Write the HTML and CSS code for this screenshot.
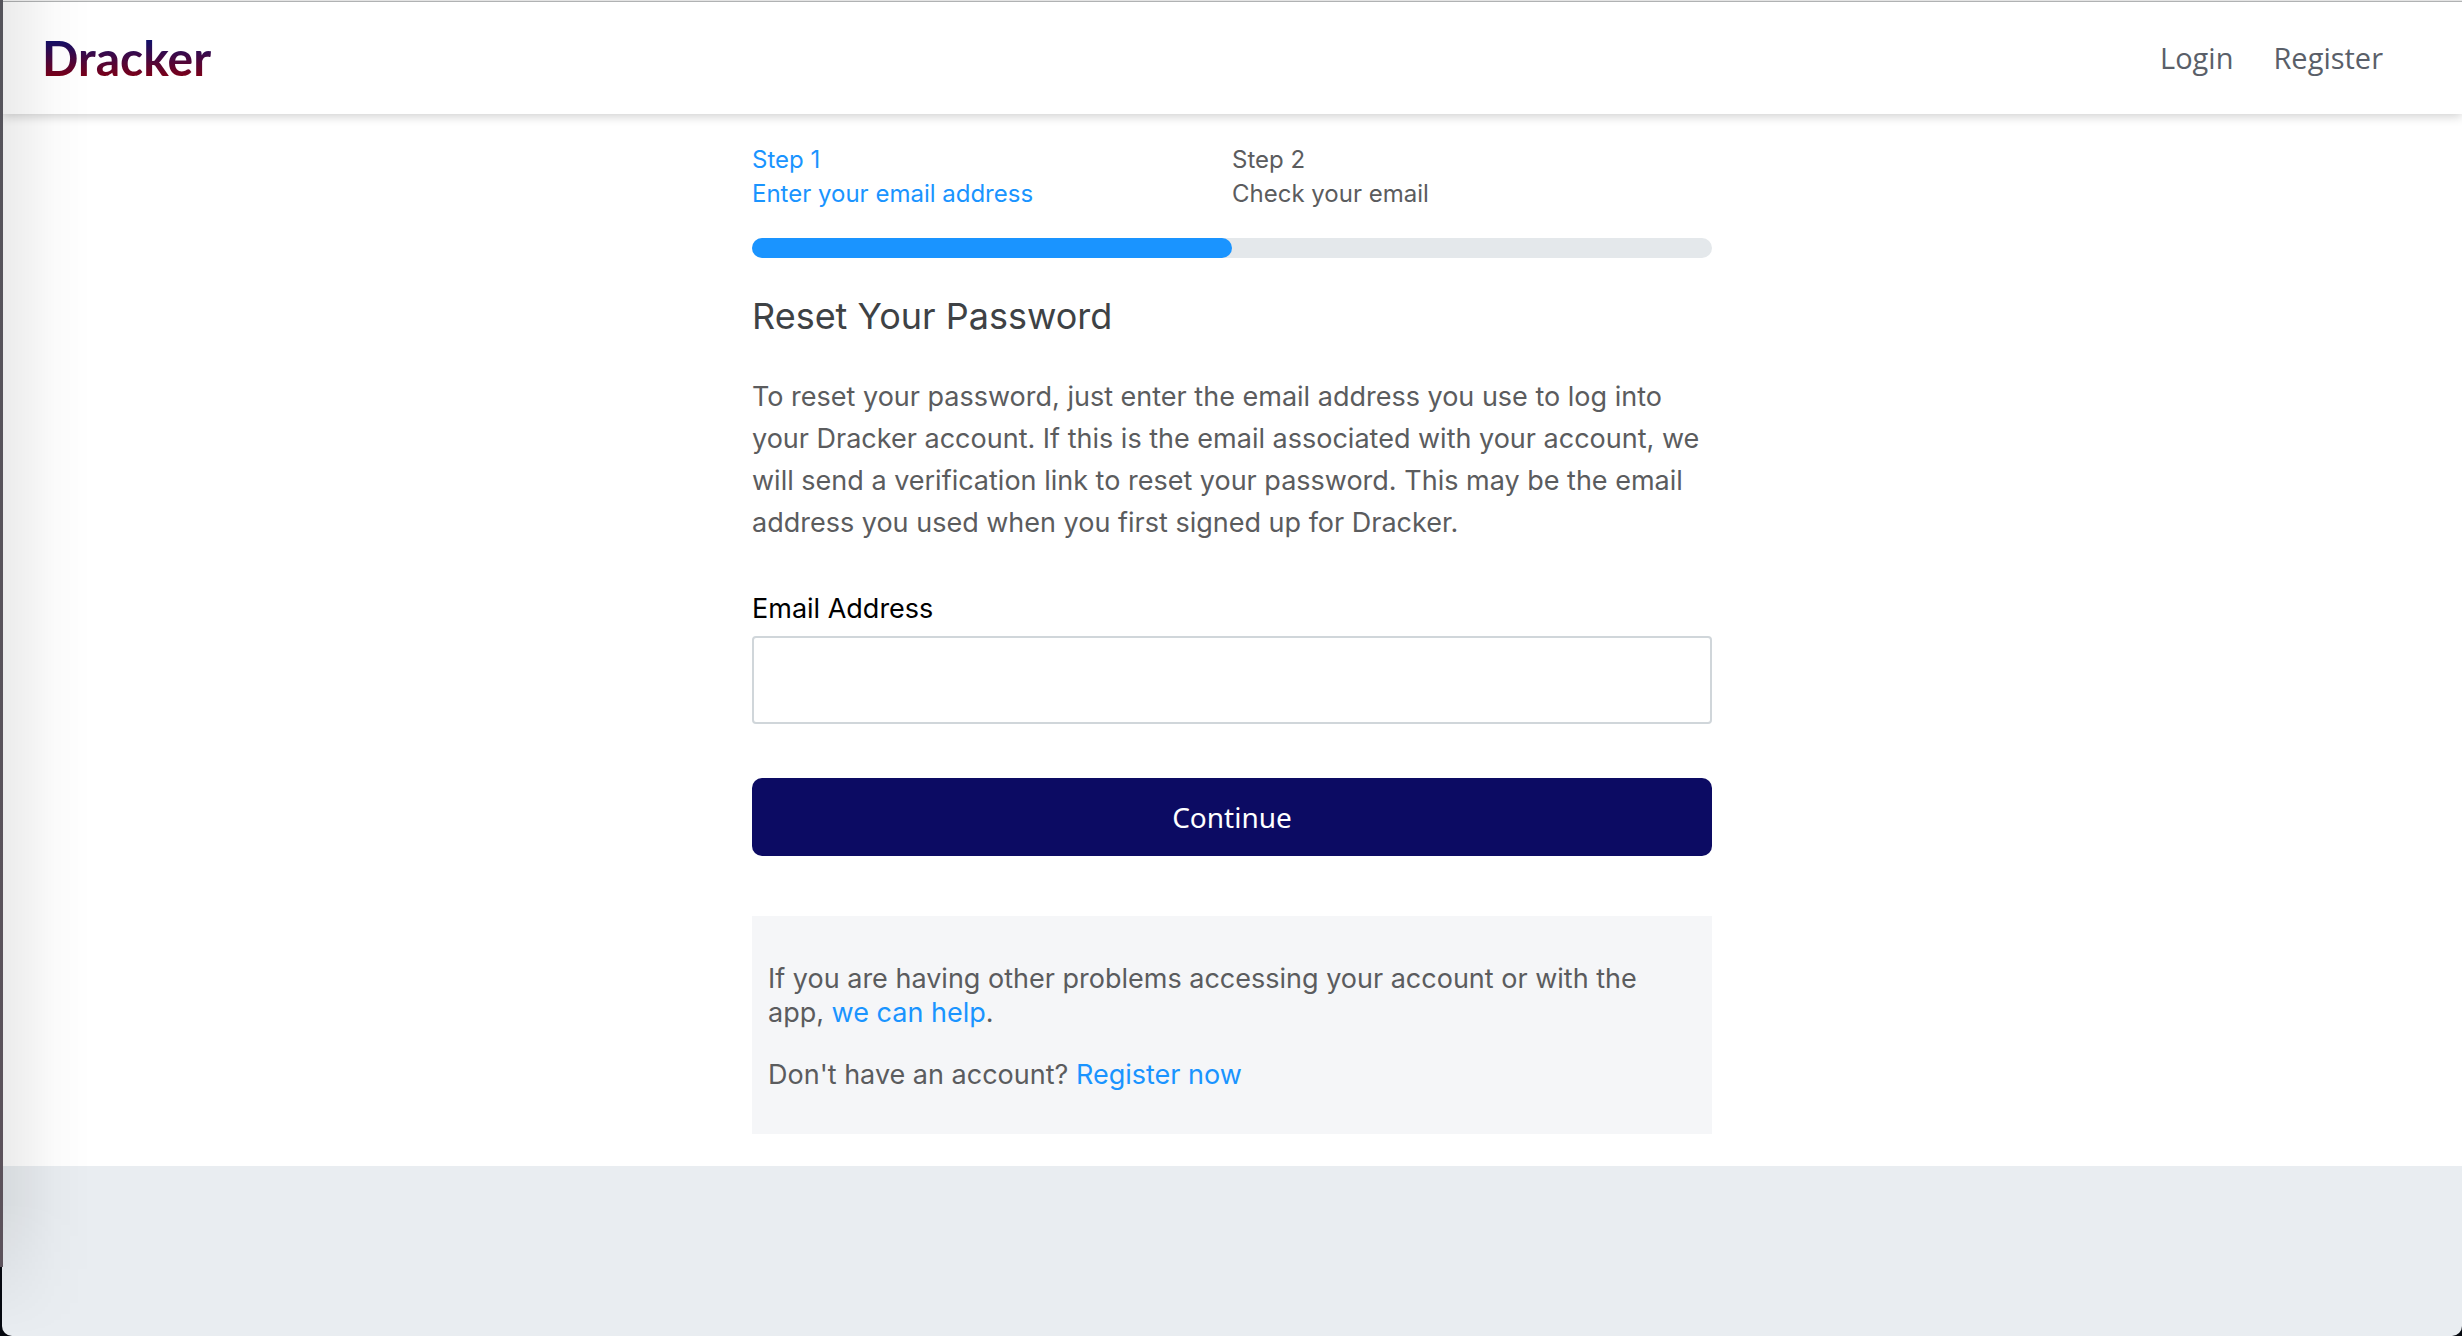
FILE: index.html
```html
<!DOCTYPE html>
<html lang="en">
<head>
  <meta charset="utf-8">
  <meta name="viewport" content="width=device-width, initial-scale=1">
  <title>Dracker - Reset Your Password</title>
  <link rel="stylesheet" href="styles.css">
</head>
<body>
  <div class="window">
    <header class="header">
      <a class="logo" href="#">Dracker</a>
      <nav class="nav">
        <a href="#">Login</a>
        <a href="#">Register</a>
      </nav>
    </header>

    <main class="main">
      <div class="column">
        <ol class="steps">
          <li class="step step-active"><span>Step 1</span><span>Enter your email address</span></li>
          <li class="step"><span>Step 2</span><span>Check your email</span></li>
        </ol>
        <div class="progress"><div class="progress-fill" style="width: 50%"></div></div>

        <h1 class="title">Reset Your Password</h1>
        <p class="intro">To reset your password, just enter the email address you use to log into your Dracker account. If this is the email associated with your account, we will send a verification link to reset your password. This may be the email address you used when you first signed up for Dracker.</p>

        <form class="form">
          <label class="label" for="email">Email Address</label>
          <input class="input" type="email" id="email" name="email">
          <button class="button" type="submit">Continue</button>
        </form>

        <aside class="help">
          <p>If you are having other problems accessing your account or with the app, <a href="#">we can help</a>.</p>
          <p>Don't have an account? <a href="#">Register now</a></p>
        </aside>
      </div>
    </main>
  </div>
</body>
</html>
```
FILE: styles.css
```css
* {
  box-sizing: border-box;
}

html {
  background: #05080f;
}

body {
  margin: 0;
  font-family: Inter, "Liberation Sans", sans-serif;
  font-size: 27px;
  line-height: 34px;
  color: #5b5c5e;
}

a {
  color: #1a94ff;
  text-decoration: none;
}

p,
h1,
ol {
  margin: 0;
  padding: 0;
}

.window {
  position: relative;
  min-height: 100vh;
  margin-left: 2px;
  border-top: 1px solid #e4e4e4;
  border-radius: 0 0 10px 10px;
  background: #e9edf1;
  overflow: hidden;
}

/* soft shade along the left edge of the window */
.window::after {
  content: "";
  position: absolute;
  inset: 0 auto 0 0;
  width: 90px;
  background: linear-gradient(to right, rgba(0, 0, 0, 0.08), rgba(0, 0, 0, 0.05) 28%, rgba(0, 0, 0, 0.015) 60%, transparent);
  -webkit-mask-image: linear-gradient(to bottom, #000 90%, transparent);
  mask-image: linear-gradient(to bottom, #000 90%, transparent);
  pointer-events: none;
}

body::before {
  content: "";
  position: absolute;
  z-index: 1;
  inset: 0 auto 69px 0;
  width: 3px;
  background: linear-gradient(#55545b, #5c525b);
}

.header {
  position: relative;
  display: flex;
  align-items: center;
  justify-content: space-between;
  height: 113px;
  padding: 0 79px 0 40px;
  border-top: 1px solid #b0b2b3;
  background: #fff;
  box-shadow: 0 2px 10px rgba(0, 0, 0, 0.2);
}

.logo {
  font-family: Lato, sans-serif;
  font-size: 48px;
  font-weight: 700;
  line-height: 60px;
  color: transparent;
  background: linear-gradient(#10106a 20%, #7a0019 80%);
  -webkit-background-clip: text;
  background-clip: text;
}

.nav {
  display: flex;
  gap: 40px;
  font-family: "Open Sans", sans-serif;
  font-size: 29px;
}

.nav a {
  color: #5a5f69;
}

.main {
  padding: 29px 24px 32px;
  background: #fff;
}

.column {
  max-width: 960px;
  margin: 0 auto;
}

.steps {
  display: grid;
  grid-template-columns: 1fr 1fr;
  list-style: none;
  font-size: 24px;
}

.step {
  display: flex;
  flex-direction: column;
}

.step-active {
  color: #1a94ff;
}

.progress {
  height: 20px;
  margin-top: 27px;
  border-radius: 10px;
  background: #e4e8eb;
}

.progress-fill {
  height: 100%;
  border-radius: 10px;
  background: #1a94ff;
}

.title {
  margin-top: 36px;
  font-size: 36px;
  font-weight: 400;
  line-height: 44px;
  color: #3e4245;
}

.intro {
  margin-top: 38px;
  line-height: 42px;
}

.form {
  display: flex;
  flex-direction: column;
  margin-top: 48px;
}

.label {
  color: #000;
}

.input {
  height: 88px;
  margin-top: 10px;
  padding: 0 20px;
  border: 2px solid #d0d6da;
  border-radius: 4px;
  background: #fff;
  font: inherit;
}

.button {
  height: 78px;
  margin-top: 54px;
  border: 0;
  border-radius: 10px;
  background: #0c0b63;
  font-family: "Noto Sans", sans-serif;
  font-size: 28px;
  font-weight: 400;
  color: #fff;
}

.help {
  display: flex;
  flex-direction: column;
  gap: 28px;
  margin-top: 60px;
  padding: 46px 16px 42px;
  background: #f5f6f8;
}
```
